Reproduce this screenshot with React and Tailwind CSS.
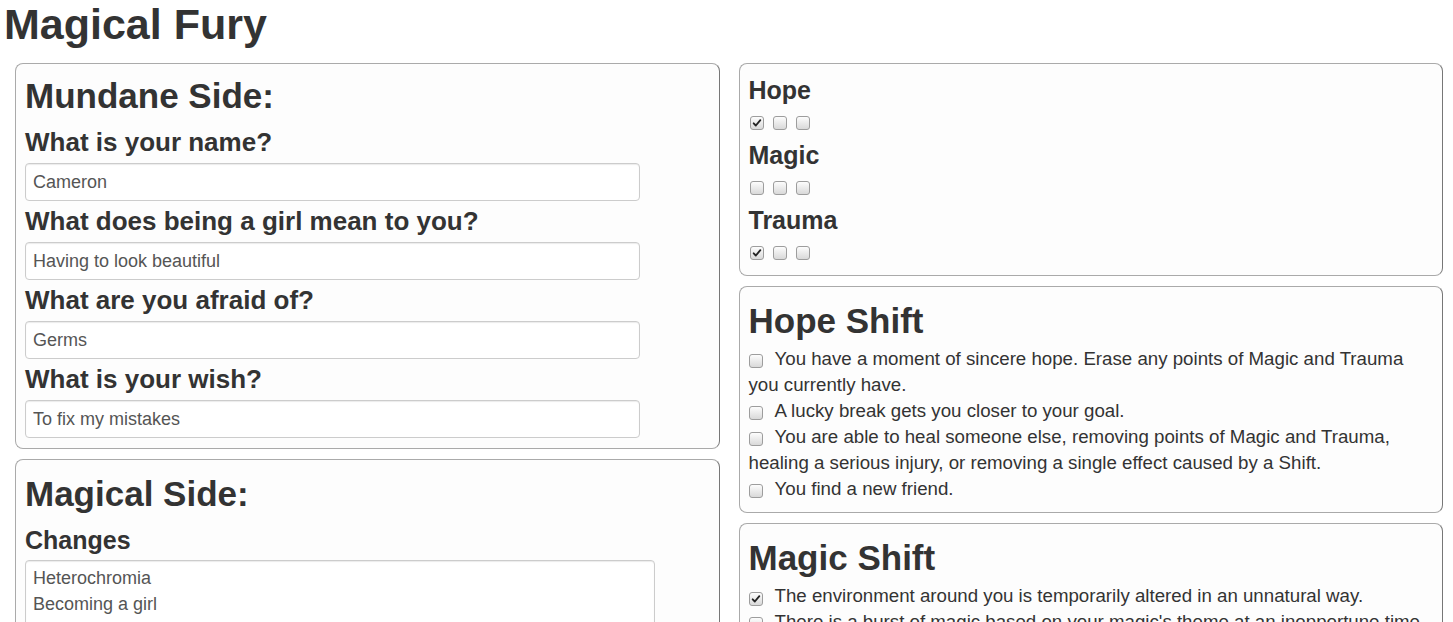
import { useState } from 'react';

const font = { fontFamily: '"Liberation Sans", Arial, Helvetica, sans-serif' };

function Box({ children }) {
  return (
    <div className="rounded-[8px] border border-[#aaa] border-r-[#777] bg-[#fdfdfd] px-[9px] pt-[12px] pb-[10px]">
      {children}
    </div>
  );
}

function Check({ checked, onChange, className = '' }) {
  return (
    <button
      type="button"
      onClick={onChange}
      className={
        'inline-flex h-[14px] w-[14px] shrink-0 items-center justify-center rounded-[3px] border border-[#9d9d9d] bg-gradient-to-b from-[#fdfdfd] to-[#d9d9d9] ' +
        className
      }
    >
      {checked && (
        <svg viewBox="0 0 12 12" className="h-[10px] w-[10px]">
          <path d="M2 6.4 L4.6 9 L10 2.6" fill="none" stroke="#222" strokeWidth="2.2" strokeLinecap="round" strokeLinejoin="round" />
        </svg>
      )}
    </button>
  );
}

function Field({ label, value }) {
  return (
    <div>
      <h3 className="mt-[6px] mb-[7px] text-[26px] font-bold leading-[28px] text-[#333]">{label}</h3>
      <input
        defaultValue={value}
        className="h-[38px] w-[615px] rounded-[4px] border border-[#ccc] bg-white px-[7px] text-[18px] text-[#555] shadow-[inset_0_1px_1px_rgba(0,0,0,0.08)] outline-none"
      />
    </div>
  );
}

function Track({ label, values, onToggle }) {
  return (
    <div className="mb-[6px] last:mb-0">
      <h3 className="mb-[7px] text-[25px] font-bold leading-[28px] text-[#333]">{label}</h3>
      <div className="flex h-[24px] items-center gap-[9px] pl-[1px]">
        {values.map((v, i) => (
          <Check key={i} checked={v} onChange={() => onToggle(i)} />
        ))}
      </div>
    </div>
  );
}

function Shift({ title, items, onToggle }) {
  return (
    <Box>
      <h2 className="mt-[2px] mb-[5px] text-[35px] font-bold leading-[40px] text-[#333]">{title}</h2>
      <div className="text-[18.7px] leading-[26px] text-[#333]">
        {items.map((it, i) => (
          <div key={i}>
            <Check
              checked={it.checked}
              onChange={() => onToggle(i)}
              className="mr-[12px] align-[-2px]"
            />
            {it.text}
          </div>
        ))}
      </div>
    </Box>
  );
}

export default function App() {
  const [tracks, setTracks] = useState({
    Hope: [true, false, false],
    Magic: [false, false, false],
    Trauma: [true, false, false],
  });
  const [hope, setHope] = useState([
    { text: 'You have a moment of sincere hope. Erase any points of Magic and Trauma you currently have.', checked: false },
    { text: 'A lucky break gets you closer to your goal.', checked: false },
    { text: 'You are able to heal someone else, removing points of Magic and Trauma, healing a serious injury, or removing a single effect caused by a Shift.', checked: false },
    { text: 'You find a new friend.', checked: false },
  ]);
  const [magic, setMagic] = useState([
    { text: 'The environment around you is temporarily altered in an unnatural way.', checked: true },
    { text: "There is a burst of magic based on your magic's theme at an inopportune time.", checked: false },
    { text: 'Your magic takes on a life of its own for a moment.', checked: false },
  ]);

  const flip = (list, set) => (i) =>
    set(list.map((it, j) => (j === i ? { ...it, checked: !it.checked } : it)));

  return (
    <div className="min-h-screen bg-white pb-8" style={font}>
      <h1 className="mt-[2px] mb-[17px] ml-[4px] text-[43px] font-bold leading-[44px] text-[#333]">Magical Fury</h1>

      <div className="grid grid-cols-2 gap-x-[19px] pl-[15px] pr-[10px]">
        <div className="flex flex-col gap-[10px]">
          <Box>
            <h2 className="mb-[12px] text-[35px] font-bold leading-[40px] text-[#333]">Mundane Side:</h2>
            <Field label="What is your name?" value="Cameron" />
            <Field label="What does being a girl mean to you?" value="Having to look beautiful" />
            <Field label="What are you afraid of?" value="Germs" />
            <Field label="What is your wish?" value="To fix my mistakes" />
          </Box>
          <Box>
            <h2 className="mt-[2px] text-[35px] font-bold leading-[40px] text-[#333]">Magical Side:</h2>
            <h3 className="mt-[12px] mb-[6px] text-[25px] font-bold leading-[28px] text-[#333]">Changes</h3>
            <textarea
              defaultValue={'Heterochromia\nBecoming a girl\nWings'}
              className="h-[140px] w-[630px] resize-none rounded-[4px] border border-[#ccc] bg-white px-[7px] pt-[4px] text-[18px] leading-[26px] text-[#555] shadow-[inset_0_1px_1px_rgba(0,0,0,0.08)] outline-none"
            />
          </Box>
        </div>

        <div className="flex flex-col gap-[10px]">
          <Box>
            {Object.entries(tracks).map(([name, vals]) => (
              <Track
                key={name}
                label={name}
                values={vals}
                onToggle={(i) =>
                  setTracks({ ...tracks, [name]: vals.map((v, j) => (j === i ? !v : v)) })
                }
              />
            ))}
          </Box>
          <Shift title="Hope Shift" items={hope} onToggle={flip(hope, setHope)} />
          <Shift title="Magic Shift" items={magic} onToggle={flip(magic, setMagic)} />
        </div>
      </div>
    </div>
  );
}
